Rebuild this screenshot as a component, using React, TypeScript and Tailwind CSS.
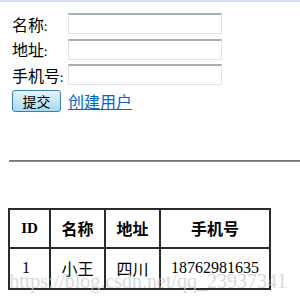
const rows = [
  { label: "名称" },
  { label: "地址" },
  { label: "手机号" },
]

const App = () => {
  return (
    <div className="relative w-[300px] h-[299px] overflow-hidden bg-white font-['Noto_Sans_CJK_SC',sans-serif] text-black">
      {/* top strip */}
      <div className="h-[2px] bg-[#d3dff0]"></div>

      {/* form */}
      <div className="pl-[12px] pt-[11px]">
        {rows.map((r) => (
          <div key={r.label} className="flex items-center h-[21px] mb-[4.5px]">
            <span className="w-[56px] text-[16px] leading-none">
              {r.label}
              <span className="text-[12px]">:</span>
            </span>
            <div className="w-[154px] h-[21px] border border-[#e2e3ea] border-t-2 border-t-[#a9afaf]"></div>
          </div>
        ))}
        <div className="flex items-center mt-[0px] h-[23px]">
          <button className="w-[49px] h-[22px] rounded-[3px] border border-[#3c7fb1] bg-gradient-to-b from-[#e5f4fc] to-[#a7d9f5] text-[14px] leading-none">
            提交
          </button>
          <a className="ml-[7px] text-[16px] leading-none text-[#0066cc] underline">创建用户</a>
        </div>
      </div>

      {/* divider */}
      <div className="ml-[9px] mt-[47px] h-[2px] bg-gradient-to-b from-[#6b6b6b] to-[#9a9a9a]"></div>

      {/* table */}
      <table className="ml-[8px] mt-[46px] border-collapse border-2 border-[#2b2b2b]">
        <thead>
          <tr className="h-[39px]">
            <th className="w-[41px] border-2 border-[#2b2b2b] text-[15px] font-['Liberation_Serif',serif] font-bold">ID</th>
            <th className="w-[55px] border-2 border-[#2b2b2b] text-[16px] font-bold">名称</th>
            <th className="w-[55px] border-2 border-[#2b2b2b] text-[16px] font-bold">地址</th>
            <th className="w-[110px] border-2 border-[#2b2b2b] text-[16px] font-bold">手机号</th>
          </tr>
        </thead>
        <tbody>
          <tr className="h-[41px]">
            <td className="border-2 border-[#2b2b2b] pl-[12px] text-[16px] font-['Liberation_Serif',serif]">1</td>
            <td className="border-2 border-[#2b2b2b] text-center text-[16px]">小王</td>
            <td className="border-2 border-[#2b2b2b] text-center text-[16px]">四川</td>
            <td className="border-2 border-[#2b2b2b] text-center text-[16px] font-['Liberation_Serif',serif]">18762981635</td>
          </tr>
        </tbody>
      </table>

      {/* watermark */}
      <div className="absolute right-[13px] top-[266px] text-[20px] font-['Liberation_Serif',serif] text-[#c8c8c8]/70 whitespace-nowrap pointer-events-none">
        https://blog.csdn.net/qq_23937341
      </div>
    </div>
  )
}

export default App
